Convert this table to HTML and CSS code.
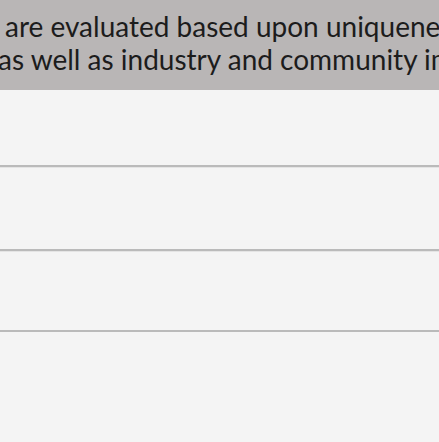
FILE: index.html
```html
<!DOCTYPE html>
<html>
<head>
<meta charset="utf-8">
<link rel="stylesheet" href="styles.css">
</head>
<body>
<header class="banner">
  <p class="line line-first">are evaluated based upon uniqueness</p>
  <p class="line line-second">as well as industry and community impact</p>
</header>
<section class="list">
  <div class="row row-a"></div>
  <div class="row row-b"></div>
  <div class="row row-c"></div>
</section>
</body>
</html>
```
FILE: styles.css
```css
html, body {
  margin: 0;
  padding: 0;
  background: #f4f4f4;
}
body {
  font-family: Lato, "Open Sans", sans-serif;
  width: 439px;
  overflow: hidden;
}
.banner {
  height: 90px;
  background: #b9b6b6;
  overflow: hidden;
  padding-top: 10px;
  box-sizing: border-box;
}
.line {
  margin: 0;
  white-space: nowrap;
  font-size: 28px;
  line-height: 33px;
  color: #1c1c1c;
}
.line-first {
  padding-left: 5px;
}
.line-second {
  margin-left: -2px;
}
.row {
  border-bottom: 2px solid #bababa;
  box-shadow: 0 1px 0 #e4e4e4;
}
.row-a { height: 75px; }
.row-b { height: 82px; }
.row-c { height: 79px; }
```
